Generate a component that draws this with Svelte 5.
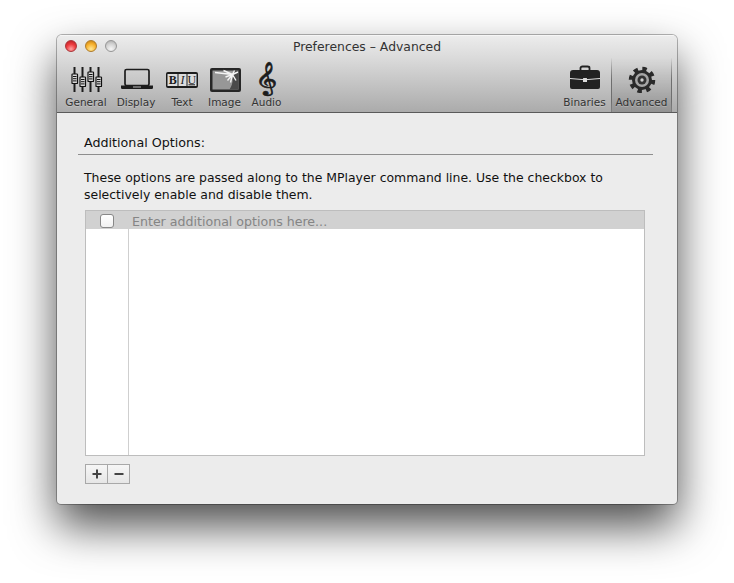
<script>
    const leftTabs = [
        { name: 'General', width: 50 },
        { name: 'Display', width: 50 },
        { name: 'Text', width: 42 },
        { name: 'Image', width: 43 },
        { name: 'Audio', width: 41 }
    ];
    const rightTabs = [
        { name: 'Binaries', width: 53 },
        { name: 'Advanced', width: 61 }
    ];
    const active = 'Advanced';

    // slider positions for the General icon: x of the track, y of the handle
    const sliders = [
        { x: 3, y: 13 },
        { x: 11, y: 16 },
        { x: 19, y: 11 },
        { x: 27, y: 16 }
    ];
</script>

{#snippet icon(name)}
    {#if name === 'General'}
        <svg width="34" height="32" viewBox="0 0 34 32">
            {#each sliders as s}
                <rect x={s.x + 1.5} y="6" width="2" height="25" fill="#1c1c1c" />
                <rect x={s.x} y={s.y} width="5.5" height="9.5" rx="0.6" fill="#d8d8d8" stroke="#111" stroke-width="1.2" />
                <path d="M{s.x + 1} {s.y + 2.5}h3.5M{s.x + 1} {s.y + 4.7}h3.5M{s.x + 1} {s.y + 6.9}h3.5" stroke="#111" stroke-width="1" />
            {/each}
        </svg>
    {:else if name === 'Display'}
        <svg width="34" height="32" viewBox="0 0 34 32">
            <rect x="6" y="8.500" width="24" height="16" rx="1.500" fill="none" stroke="#1c1c1c" stroke-width="1.700" />
            <path d="M2 24.500h32v2.500q0 1-1.500 1H3.500q-1.500 0-1.500-1z" fill="#1c1c1c" />
            <rect x="14" y="25.500" width="8" height="1" fill="#bbb" />
        </svg>
    {:else if name === 'Text'}
        <svg width="34" height="32" viewBox="0 0 34 32">
            <rect x="1" y="11" width="32" height="16" rx="2" fill="#1c1c1c" />
            <rect x="2.500" y="13" width="29" height="12" fill="#dcdcdc" />
            <path d="M13 13v12M22 13v12" stroke="#1c1c1c" stroke-width="1" />
            <text class="biu" x="7.700" y="23.200" font-weight="700">B</text>
            <text class="biu" x="17.500" y="23.200" font-style="italic">I</text>
            <text class="biu" x="26.800" y="22.500">U</text>
            <rect x="23.500" y="23.300" width="6.500" height="1" fill="#1c1c1c" />
        </svg>
    {:else if name === 'Image'}
        <svg width="34" height="32" viewBox="0 0 34 32">
            <rect x="2" y="7" width="31" height="24" rx="2" fill="#262626" />
            <rect x="4.500" y="9.500" width="26" height="19" fill="#979797" />
            <path d="M26 9.500h4.500v19h-9c2-3 3.500-7 3-11z" fill="#4a4a4a" />
            <path d="M24.500 13.500L7 11.500M24.500 13.500l-9 -4M24.500 13.500l-7 2.500M24.500 13.500l-5 6M24.500 13.500l-2 8M24.500 13.500l3.500 6M24.500 13.500l5.500 -2.500M24.500 13.500l2 -4" stroke="#f4f4f4" stroke-width="1.400" fill="none" />
        </svg>
    {:else if name === 'Audio'}
        <span class="clef">&#x1D11E;</span>
    {:else if name === 'Binaries'}
        <svg width="34" height="32" viewBox="0 0 34 32">
            <path d="M12.500 10V7q0-1.500 2-1.500h5q2 0 2 1.500v3" fill="none" stroke="#222" stroke-width="1.800" />
            <path d="M2 12q0-3 3-3h24q3 0 3 3v14q0 2-2 2H4q-2 0-2-2z" fill="#222" />
            <path d="M2 17.500q15 2.500 30 0" fill="none" stroke="#ddd" stroke-width="1" />
            <rect x="15" y="17" width="4" height="4" rx="0.500" fill="#ddd" />
        </svg>
    {:else if name === 'Advanced'}
        <svg width="34" height="32" viewBox="0 0 34 32">
            <circle cx="17" cy="19" r="11" fill="none" stroke="#2a2a2a" stroke-width="4.500" stroke-dasharray="4.300 4.339" />
            <circle cx="17" cy="19" r="10" fill="#2a2a2a" />
            <circle cx="17" cy="19" r="7" fill="#a6a6a6" />
            <circle cx="17" cy="19" r="4.500" fill="#333" />
            <circle cx="17" cy="19" r="1.700" fill="#cfcfcf" />
        </svg>
    {/if}
{/snippet}

{#snippet tab(t)}
    <div class="tab" class:active={t.name === active} style="width: {t.width}px">
        <div class="tab-icon">{@render icon(t.name)}</div>
        <span class="tab-label">{t.name}</span>
    </div>
{/snippet}

<div class="page">
    <div class="window">
        <header class="header">
            <div class="titlebar">
                <div class="lights">
                    <span class="light red"></span>
                    <span class="light amber"></span>
                    <span class="light off"></span>
                </div>
                <div class="title">Preferences – Advanced</div>
            </div>
            <div class="toolbar">
                <div class="tabs">
                    {#each leftTabs as t}
                        {@render tab(t)}
                    {/each}
                </div>
                <div class="tabs">
                    {#each rightTabs as t}
                        {@render tab(t)}
                    {/each}
                </div>
            </div>
        </header>

        <main class="content">
            <h2 class="section-title">Additional Options:</h2>
            <p class="description">
                These options are passed along to the MPlayer command line. Use the checkbox to selectively enable and disable them.
            </p>

            <div class="table">
                <div class="row selected">
                    <div class="cell-check"><span class="checkbox"></span></div>
                    <div class="cell-text">Enter additional options here...</div>
                </div>
                <div class="table-fill"><div class="fill-col"></div></div>
            </div>

            <div class="buttons">
                <button class="btn">
                    <svg width="10" height="10" viewBox="0 0 10 10"><path d="M5 0.500v9M0.500 5h9" stroke="#444" stroke-width="2" /></svg>
                </button>
                <button class="btn">
                    <svg width="10" height="10" viewBox="0 0 10 10"><path d="M0.500 5h9" stroke="#444" stroke-width="2" /></svg>
                </button>
            </div>
        </main>
    </div>
</div>

<style>
    :global(body) {
        background: #fff;
    }

    .page {
        box-sizing: border-box;
        height: 583px;
        padding: 35px 0 0 57px;
        overflow: hidden;
    }

    .window {
        width: 620px;
        height: 469px;
        display: flex;
        flex-direction: column;
        background: #ececec;
        border-radius: 5px 5px 4px 4px;
        box-shadow: 0 0 0 1px rgba(0, 0, 0, 0.28), 0 22px 45px rgba(0, 0, 0, 0.7);
        font-family: "DejaVu Sans", sans-serif;
        overflow: hidden;
    }

    .header {
        height: 78px;
        flex: none;
        box-sizing: border-box;
        display: flex;
        flex-direction: column;
        background: linear-gradient(#ececec 0, #d8d8d8 25px, #ababab 100%);
        border-top: 1px solid #f6f6f6;
        border-bottom: 1px solid #5a5a5a;
    }

    .titlebar {
        height: 22px;
        box-sizing: border-box;
        padding-bottom: 2px;
        position: relative;
        display: flex;
        align-items: center;
        justify-content: center;
    }

    .lights {
        position: absolute;
        left: 8px;
        top: 4px;
        display: flex;
        gap: 8px;
    }

    .light {
        width: 12px;
        height: 12px;
        border-radius: 50%;
        box-sizing: border-box;
    }

    .red {
        background: radial-gradient(circle at 50% 80%, #ffa3a3 0, #ee3d40 50%, #b31a20 100%);
        border: 1px solid #a83438;
    }

    .amber {
        background: radial-gradient(circle at 50% 80%, #ffe896 0, #f7b02c 55%, #bb7a10 100%);
        border: 1px solid #ad7a2a;
    }

    .off {
        background: radial-gradient(circle at 50% 80%, #f6f6f6 0, #d2d2d2 55%, #a6a6a6 100%);
        border: 1px solid #969696;
    }

    .title {
        font-size: 12.400px;
        color: #333;
    }

    .toolbar {
        flex: 1;
        display: flex;
        justify-content: space-between;
        padding: 0 5px 0 4px;
    }

    .tabs {
        display: flex;
    }

    .tab {
        box-sizing: border-box;
        display: flex;
        flex-direction: column;
        align-items: center;
        border-left: 1px solid transparent;
        border-right: 1px solid transparent;
    }

    .tab.active {
        background: linear-gradient(rgba(0, 0, 0, 0), rgba(0, 0, 0, 0.14));
        border-image: linear-gradient(rgba(90, 90, 90, 0), #6e6e6e 40%, #6e6e6e 80%, rgba(90, 90, 90, 0.3)) 1;
    }

    .tab-icon {
        height: 32px;
        margin-top: 3px;
        display: flex;
        justify-content: center;
    }

    .tab-label {
        font-size: 10.500px;
        color: #333;
        margin-top: 3px;
        white-space: nowrap;
        text-shadow: 0 1px 0 rgba(255, 255, 255, 0.25);
    }

    .clef {
        font-size: 29px;
        line-height: 34px;
        color: #1c1c1c;
        display: inline-block;
        transform: scaleX(1.3);
        -webkit-text-stroke: 0.6px #1c1c1c;
    }

    .biu {
        font-family: "Liberation Serif", serif;
        font-size: 12px;
        fill: #1c1c1c;
        text-anchor: middle;
    }

    .content {
        flex: 1;
        display: flex;
        flex-direction: column;
        padding: 22px 24px 0 21px;
    }

    .section-title {
        margin: 0;
        padding: 0 0 4px 6px;
        font-size: 12.700px;
        font-weight: 400;
        line-height: 15px;
        color: #111;
        border-bottom: 1px solid #8e8e8e;
    }

    .description {
        margin: 14px 0 7px 6px;
        width: 545px;
        font-size: 12.450px;
        line-height: 17px;
        color: #111;
    }

    .table {
        margin: 0 8px 0 7px;
        height: 246px;
        box-sizing: border-box;
        display: flex;
        flex-direction: column;
        background: #fff;
        border: 1px solid #bdbdbd;
    }

    .row {
        display: flex;
        height: 18px;
        flex: none;
        background: #d1d1d1;
    }

    .cell-check {
        width: 42px;
        flex: none;
        box-sizing: border-box;
        padding-top: 2px;
        display: flex;
        justify-content: center;
        align-items: center;
    }

    .checkbox {
        width: 14px;
        height: 14px;
        box-sizing: border-box;
        background: linear-gradient(#fff, #f1f1f1);
        border: 1px solid #888;
        border-radius: 3px;
    }

    .cell-text {
        margin-left: 4px;
        font-size: 12.600px;
        line-height: 22px;
        color: #858585;
    }

    .table-fill {
        flex: 1;
    }

    .fill-col {
        width: 43px;
        box-sizing: border-box;
        height: 100%;
        border-right: 1px solid #cfcfcf;
    }

    .buttons {
        display: flex;
        margin: 8px 0 0 7px;
    }

    .btn {
        width: 23px;
        height: 20px;
        padding: 0;
        display: flex;
        align-items: center;
        justify-content: center;
        background: linear-gradient(#f6f6f6, #e6e6e6);
        border: 1px solid #a8a8a8;
    }

    .btn + .btn {
        margin-left: -1px;
    }
</style>
